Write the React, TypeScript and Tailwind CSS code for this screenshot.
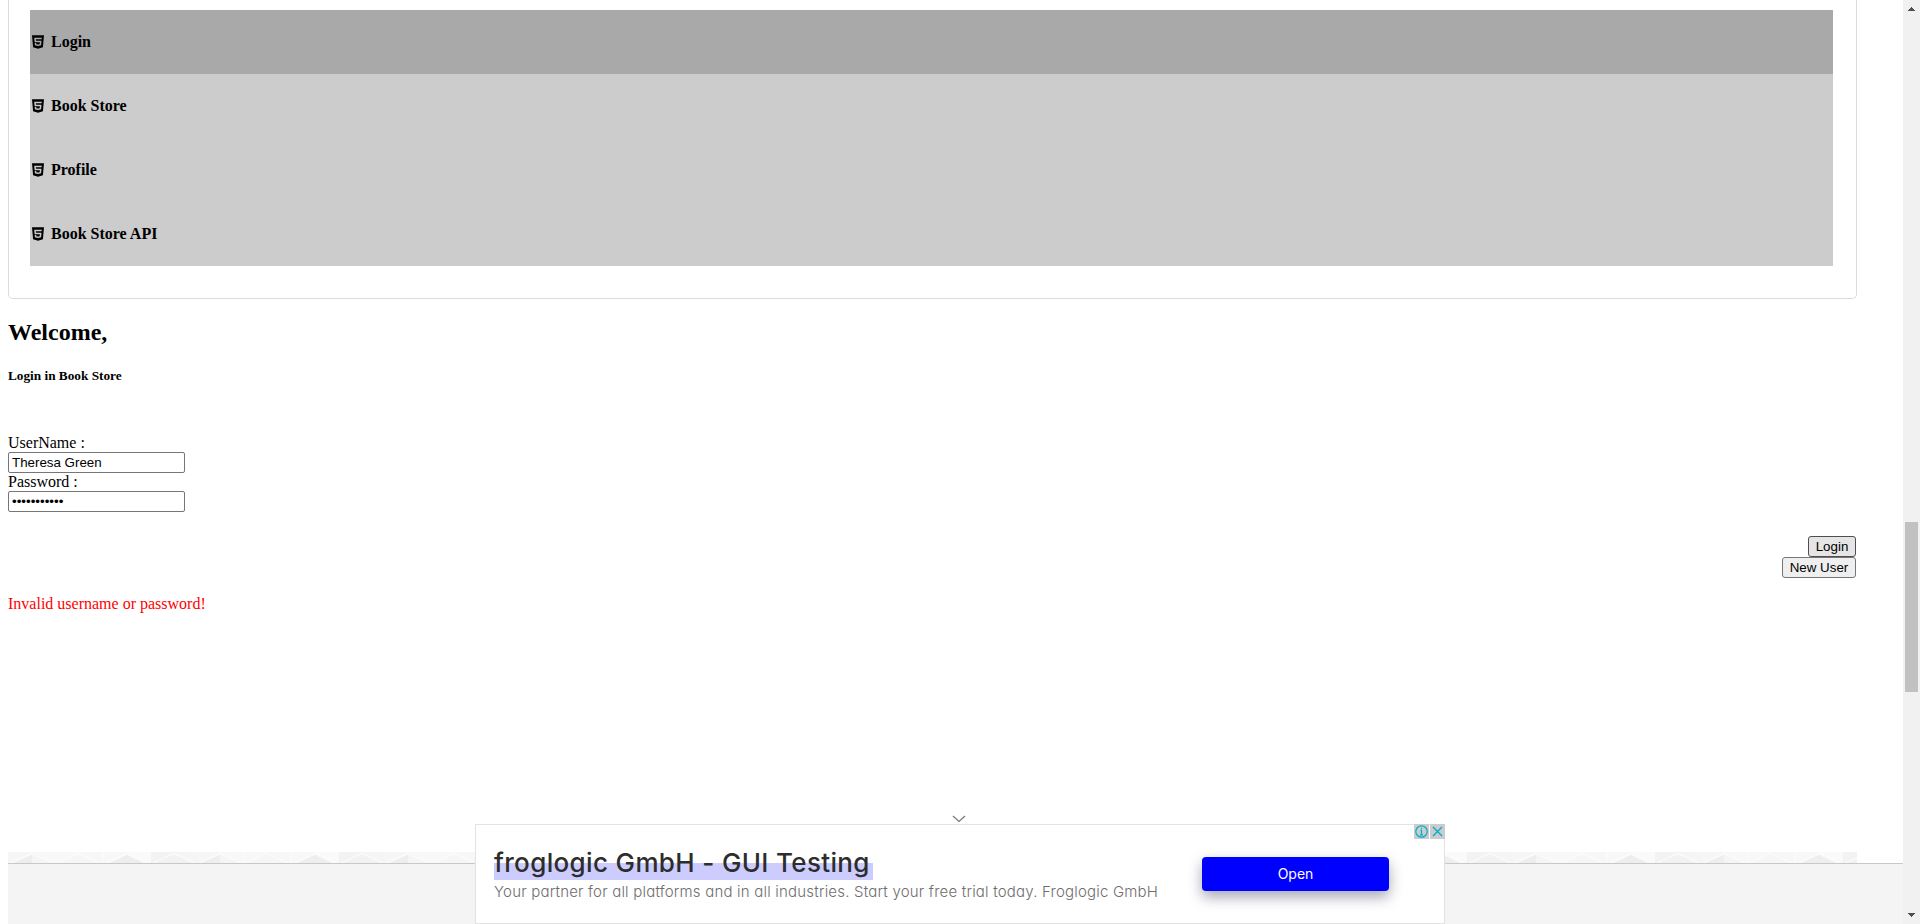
import React from 'react';
import { RiHtml5Fill } from 'react-icons/ri';

const items = ['Login', 'Book Store', 'Profile', 'Book Store API'];

function Pattern() {
  return (
    <svg className="block h-[11px] w-[1849px]">
      <defs>
        <pattern id="tri" width="188" height="11" patternUnits="userSpaceOnUse">
          <rect width="188" height="11" fill="#f8f8f8" />
          <rect x="0" width="24" height="11" fill="#f6f6f6" />
          <rect x="72" width="23" height="11" fill="#f7f7f7" />
          <rect x="119" width="24" height="11" fill="#fafafa" />
          <rect x="143" width="23" height="11" fill="#f3f3f3" />
          <rect x="166" width="22" height="11" fill="#f5f5f5" />
          <path d="M5 11L24 3V11Z" fill="#eeeeee" />
          <path d="M24 3L43 11H24Z" fill="#f5f5f5" />
          <path d="M52 11L71 3L90 11Z" fill="#f6f6f6" />
          <path d="M102 11L119 3L136 11Z" fill="#eeeeee" />
          <path d="M147 11L166 3L185 11Z" fill="#f2f2f2" />
          <path
            d="M3 11L24 1.5L45 11M50 11L71 1.5L92 11M98 11L119 1.5L140 11M145 11L166 1.5L187 11M48 0V11M95 0V11"
            stroke="#fcfcfc"
            strokeWidth="1.3"
            fill="none"
          />
        </pattern>
      </defs>
      <rect width="1849" height="11" fill="url(#tri)" />
    </svg>
  );
}

function Scrollbar() {
  return (
    <div className="flex h-full w-[17px] shrink-0 flex-col items-center bg-[#f1f1f1]">
      <svg className="h-[17px] w-[17px] shrink-0" shapeRendering="crispEdges">
        <path d="M8 7h1v1h1v1h1v1h1v1H5v-1h1V9h1V8h1z" fill="#505050" />
      </svg>
      <div className="mt-[505px] h-[170px] w-[13px] bg-[#c1c1c1]" />
      <svg className="mt-auto h-[17px] w-[17px] shrink-0" shapeRendering="crispEdges">
        <path d="M5 6h7v1h-1v1h-1v1H9v1H8V9H7V8H6V7H5z" fill="#505050" />
      </svg>
    </div>
  );
}

function Ad() {
  return (
    <div className="absolute top-[824px] left-[475px] flex h-[100px] w-[970px] border border-[#e3e3e3] bg-white font-['Inter',sans-serif] [font-feature-settings:'cv11']">
      <svg className="absolute top-[-11px] left-[475px] h-[9px] w-[16px]" fill="none" stroke="#777" strokeWidth="1.2">
        <path d="M2 2L8 7.5L14 2" />
      </svg>
      <div className="ml-[18px] flex flex-col items-start pt-[22px]">
        <div className="h-[33px] w-[379px] bg-[linear-gradient(transparent_16px,#ccccff_16px)] text-[26px] leading-[32px] font-medium tracking-[0.35px] whitespace-nowrap text-[#2d2d2d]">
          froglogic GmbH - GUI Testing
        </div>
        <div className="mt-[2px] text-[15px] leading-[20px] font-light tracking-[0.2px] whitespace-nowrap text-[#6e6e6e]">
          Your partner for all platforms and in all industries. Start your free trial today. Froglogic GmbH
        </div>
      </div>
      <button className="absolute top-[32px] left-[726px] h-[34px] w-[187px] rounded-[4px] bg-[#0000ff] text-[14px] text-white shadow-[0_6px_14px_rgba(30,35,70,0.4)]">
        Open
      </button>
      <div className="absolute top-[-1px] right-[-1px] flex gap-px">
        <svg className="h-[15px] w-[15px] bg-[#ccc]" fill="none" stroke="#00aecd" strokeWidth="1.2">
          <circle cx="7.5" cy="7.5" r="5.7" />
          <path d="M7.5 3.7v1.5M6.3 6.5h1.2v4.4M6 10.9h3" />
        </svg>
        <svg className="h-[15px] w-[15px] bg-[#ccc]" fill="none" stroke="#00aecd" strokeWidth="1.4">
          <path d="M3 3l9 9M12 3l-9 9" />
        </svg>
      </div>
    </div>
  );
}

export default function App() {
  return (
    <div className="relative flex h-[924px] w-[1920px] overflow-hidden bg-white font-['Liberation_Serif',serif] text-[16px] leading-[18px] text-black">
      <div className="flex w-[1903px] flex-col pl-[8px]">
        <div className="h-[299px] w-[1849px] shrink-0 rounded-b-[5px] border border-t-0 border-[#dcdcdc] pt-[10px] pl-[21px]">
          <ul className="w-[1803px] bg-[#ccc] font-bold">
            {items.map((t, i) => (
              <li key={t} className={i === 0 ? 'flex h-[64px] items-center bg-[#a9a9a9]' : 'flex h-[64px] items-center'}>
                <RiHtml5Fill className="h-[16px] w-[16px]" />
                <span className="ml-[5px]">{t}</span>
              </li>
            ))}
          </ul>
        </div>
        <h2 className="mt-[20px] text-[24px] leading-[27px] font-bold">Welcome,</h2>
        <h5 className="mt-[22px] text-[13.28px] leading-[15px] font-bold">Login in Book Store</h5>
        <form className="mt-[51px] flex w-[1849px] flex-col items-start">
          <label>UserName :</label>
          <input
            className="h-[21px] w-[177px] rounded-[2px] border border-[#767676] px-[3px] font-['Liberation_Sans',sans-serif] text-[13.33px]"
            defaultValue="Theresa Green"
          />
          <label>Password :</label>
          <input
            type="password"
            className="h-[21px] w-[177px] rounded-[2px] border border-[#767676] px-[3px] font-['Liberation_Sans',sans-serif] text-[13.33px]"
            defaultValue="abcdefghijk"
          />
          <div className="mt-[24px] flex w-[1848px] flex-col items-end font-['Liberation_Sans',sans-serif] text-[13.33px] leading-[15px]">
            <button type="button" className="h-[21px] w-[48px] rounded-[3px] border border-[#4f4f4f] bg-[#e5e5e5]">Login</button>
            <button type="button" className="h-[21px] w-[74px] rounded-[3px] border border-[#767676] bg-[#efefef]">New User</button>
          </div>
        </form>
        <p className="mt-[17px] text-[#ff0000]">Invalid username or password!</p>
        <div className="mt-auto">
          <Pattern />
          <div className="h-[61px] border-t border-[#c8c8c8] bg-[#f4f4f4]" />
        </div>
      </div>
      <Scrollbar />
      <Ad />
    </div>
  );
}
